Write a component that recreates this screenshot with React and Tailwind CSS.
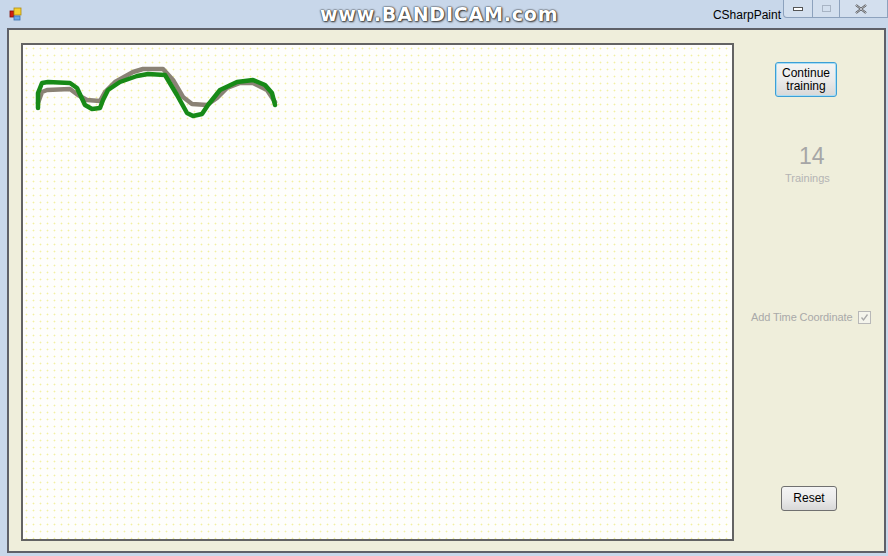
import React from "react";

const GREEN = "38,108 38,93 42,83 48,82 70,83 77,88 85,105 92,109 100,108 103,100 108,90 120,82 137,76 148,74 165,75 177,95 187,113 193,116 202,114 208,105 220,90 237,82 253,80 265,85 272,93 275,105";
const GRAY = "38,103 42,92 47,90 70,89 78,95 87,100 100,101 105,92 115,82 133,72 143,69 163,69 173,80 183,97 192,104 207,105 217,98 227,88 240,83 253,83 267,90 275,102";

function AppIcon() {
  return (
    <svg width="14" height="14" viewBox="0 0 14 14">
      <rect x="1" y="4" width="4" height="6" fill="#d02010" stroke="#801008" strokeWidth="0.8" />
      <rect x="5" y="1" width="7" height="7" fill="#f4d030" stroke="#b08a10" strokeWidth="0.8" />
      <rect x="5" y="9" width="6" height="4" fill="#6aa8e8" stroke="#3a70b0" strokeWidth="0.8" />
    </svg>
  );
}

function TitleBar() {
  return (
    <div className="h-[28px] flex items-start relative bg-[#c8d7ea]">
      <div className="mt-[7px] ml-[9px]">
        <AppIcon />
      </div>
      <div className="absolute left-[320px] top-[3px] text-white font-bold tracking-[0.8px] text-[19px] leading-[23px] [font-family:'DejaVu_Sans',sans-serif] [text-shadow:0_0_1px_#222,0_0_2px_#333,1px_1px_2px_#444]">
        www.BANDICAM.com
      </div>
      <div className="ml-auto flex items-start">
        <span className="mt-[6px] mr-[2px] text-[12px] text-black [font-family:'Liberation_Sans',sans-serif]">CSharpPaint</span>
        <div className="w-[30px] h-[18px] border border-t-0 border-[#8da2bd] rounded-bl-[4px] bg-[#d3dfee] flex items-center justify-center">
          <div className="w-[10px] h-[4px] border border-[#555] bg-white" />
        </div>
        <div className="w-[27px] h-[18px] border border-t-0 border-l-0 border-[#8da2bd] bg-[#d3dfee] flex items-center justify-center">
          <div className="w-[9px] h-[7px] border border-[#a8b4c4]" />
        </div>
        <div className="w-[48px] h-[18px] border border-t-0 border-l-0 border-[#8da2bd] bg-[#d3dfee] flex items-center pl-[15px]">
          <svg width="12" height="10" viewBox="0 0 12 10">
            <path d="M1 1 L11 9 M11 1 L1 9" stroke="#444" strokeWidth="2.2" fill="none" />
            <path d="M1 1 L11 9 M11 1 L1 9" stroke="#e8eef6" strokeWidth="0.8" fill="none" />
          </svg>
        </div>
      </div>
    </div>
  );
}

function Canvas() {
  return (
    <div className="w-[713px] h-[498px] border-2 border-[#636363] bg-[#fefefc] bg-[radial-gradient(#f2f0a0_0.8px,transparent_1.1px)] bg-[length:7px_7px] relative">
      <svg className="absolute left-[-23px] top-[-45px]" width="300" height="130">
        <polyline points={GRAY} fill="none" stroke="#8a8275" strokeWidth="4.5" strokeLinejoin="round" strokeLinecap="round" />
        <polyline points={GREEN} fill="none" stroke="#178a17" strokeWidth="4.5" strokeLinejoin="round" strokeLinecap="round" />
      </svg>
    </div>
  );
}

function WinButton({ children, focused, className }) {
  return (
    <div
      className={`rounded-[3px] border bg-gradient-to-b from-[#f4f4f4] via-[#ebebeb] to-[#d8d8d8] flex items-center justify-center text-center text-[12px] leading-[13px] text-black [font-family:'Liberation_Sans',sans-serif] ${
        focused ? "border-[#3c9fd6] shadow-[inset_0_0_0_1px_#a8dcf4]" : "border-[#707070]"
      } ${className}`}
    >
      {children}
    </div>
  );
}

function SidePanel() {
  return (
    <div className="flex-1 flex flex-col items-start [font-family:'Liberation_Sans',sans-serif]">
      <WinButton focused className="mt-[32px] ml-[41px] w-[62px] h-[35px]">
        Continue
        <br />
        training
      </WinButton>
      <div className="mt-[47px] ml-[65px] text-[23px] leading-[25px] text-[#a6a6a6]">14</div>
      <div className="mt-[3px] ml-[51px] text-[11px] leading-[13px] text-[#b4b4b4]">Trainings</div>
      <div className="mt-[124px] w-full flex items-center pl-[17px]">
        <span className="text-[11px] text-[#a9a9a9] tracking-[-0.1px]">Add Time Coordinate</span>
        <div className="ml-[6px] w-[13px] h-[13px] border border-[#b8b8b8] bg-[#f4f4ec] flex items-center justify-center">
          <svg width="9" height="9" viewBox="0 0 9 9">
            <path d="M1.5 4.5 L3.5 7 L7.5 1.5" stroke="#a8a8a8" strokeWidth="1.3" fill="none" />
          </svg>
        </div>
      </div>
      <WinButton className="mt-auto mb-[40px] ml-[47px] w-[56px] h-[25px]">Reset</WinButton>
    </div>
  );
}

export default function App() {
  return (
    <div className="w-[888px] h-[556px] bg-[#c8d7ea] flex flex-col overflow-hidden">
      <TitleBar />
      <div className="flex-1 ml-[7px] mr-[2px] mb-[3px] border-2 border-[#5e6068] bg-[#efeedb] flex">
        <div className="pl-[12px] pt-[13px]">
          <Canvas />
        </div>
        <SidePanel />
      </div>
    </div>
  );
}
